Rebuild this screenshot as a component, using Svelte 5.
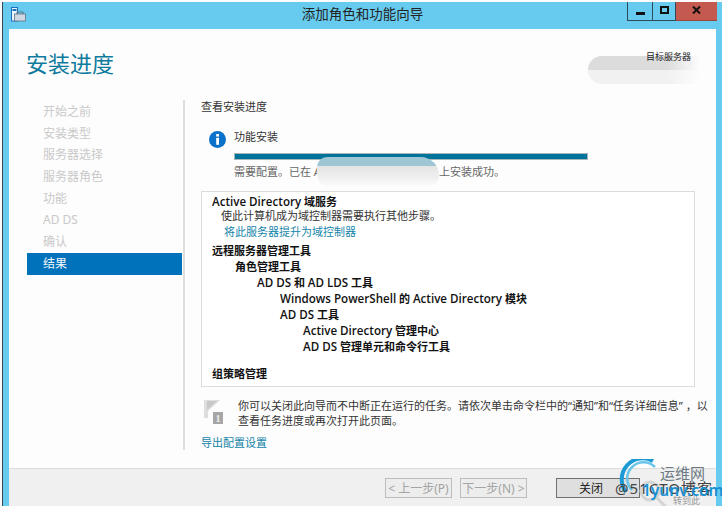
<script>
  const steps = ['开始之前','安装类型','服务器选择','服务器角色','功能','AD DS','确认'];
</script>

<div class="screen">
<div class="window">
  <header class="titlebar">
    <svg class="appicon" width="15" height="15" viewBox="0 0 15 15">
      <rect x="0.5" y="0.5" width="6" height="13.5" fill="#eaf6fd" stroke="#1f6fc0"/>
      <rect x="1.5" y="2" width="4" height="2" fill="#1f6fc0"/>
      <rect x="3.5" y="7" width="11" height="7" fill="#cfd8e0" stroke="#5e7388" stroke-width="0.8"/>
      <path d="M6 7V5h6v2" fill="none" stroke="#5e7388"/>
    </svg>
    <div class="wintitle">添加角色和功能向导</div>
    <div class="winbtns">
      <div class="wb min"><span></span></div>
      <div class="wb max"><span></span></div>
      <div class="wb close">
        <svg width="9" height="8" viewBox="0 0 9 8"><path d="M1 0.5l7 7M8 0.5l-7 7" stroke="#111" stroke-width="2"/></svg>
      </div>
    </div>
  </header>

  <div class="client">
    <div class="head">
      <h1>安装进度</h1>
      <div class="blob b1"></div>
      <div class="target">目标服务器</div>
    </div>
    <div class="body">
      <nav class="side">
        {#each steps as s}
          <div class="step">{s}</div>
        {/each}
        <div class="step current">结果</div>
      </nav>
      <main class="content">
        <div class="subhead">查看安装进度</div>
        <div class="status">
          <svg class="info" width="17" height="17" viewBox="0 0 17 17">
            <circle cx="8.5" cy="8.5" r="8.5" fill="#0a72c8"/>
            <rect x="7.2" y="3" width="2.8" height="2.6" fill="#fff"/>
            <rect x="7.2" y="6.8" width="2.8" height="7" fill="#fff"/>
          </svg>
          <div class="statusbody">
            <div class="statustitle">功能安装</div>
            <div class="bar"></div>
            <div class="statusmsg"><span class="msg1">需要配置。已在 A</span><span class="msg2">上安装成功。</span></div>
            <div class="blob b2"></div>
          </div>
        </div>
        <section class="results">
          <div class="r b l0 first"><span class="lat">Active Directory</span> 域服务</div>
          <div class="r l0b">使此计算机成为域控制器需要执行其他步骤。</div>
          <div class="r link l0c">将此服务器提升为域控制器</div>
          <div class="r b l0 gap">远程服务器管理工具</div>
          <div class="r b l1">角色管理工具</div>
          <div class="r b l2"><span class="lat">AD DS</span> 和 <span class="lat">AD LDS</span> 工具</div>
          <div class="r b l3"><span class="lat">Windows PowerShell</span> 的 <span class="lat">Active Directory</span> 模块</div>
          <div class="r b l3"><span class="lat">AD DS</span> 工具</div>
          <div class="r b l4"><span class="lat">Active Directory</span> 管理中心</div>
          <div class="r b l4"><span class="lat">AD DS</span> 管理单元和命令行工具</div>
          <div class="r b l0 gap2">组策略管理</div>
        </section>
        <div class="note">
          <svg class="flag" width="19" height="24" viewBox="0 0 19 24">
            <path d="M0 0h16l-12 11v7H0z" fill="#dedede"/>
            <path d="M3 1h10L3 10z" fill="#c8c8c8"/>
            <rect x="9" y="12" width="10" height="12" fill="#a6a6a6"/>
            <text x="14" y="22" text-anchor="middle" font-size="10" font-weight="700" fill="#eee" font-family="Liberation Serif, serif">1</text>
          </svg>
          <p>你可以关闭此向导而不中断正在运行的任务。请依次单击命令栏中的“通知”和“任务详细信息” ，以<br>查看任务进度或再次打开此页面。</p>
        </div>
        <div class="link export">导出配置设置</div>
      </main>
    </div>
    <footer class="foot">
      <button disabled>&lt; 上一步(P)</button>
      <button disabled>下一步(N) &gt;</button>
      <button class="closebtn">关闭</button>
    </footer>
  </div>

  <div class="wm">
    <svg class="wmlogo" width="60" height="50" viewBox="0 0 60 50">
      <circle cx="33" cy="32" r="9" fill="none" stroke="#d4d4d4" stroke-width="3"/>
      <path d="M40 39l9 9" stroke="#d4d4d4" stroke-width="3"/>
      <path d="M36 2A21 21 0 0 0 9 33" fill="none" stroke="#1c9ad6" stroke-width="4"/>
      <path d="M38 8A16 16 0 0 0 15 31" fill="none" stroke="#6cc6ea" stroke-width="2.5"/>
    </svg>
    <span class="wmcn">运维网</span>
    <span class="wmgrey">@51CTO博客</span>
    <span class="wmen">1yunv.com</span>
    <span class="wmsub">转到此</span>
  </div>
</div>
</div>

<style>
  :global(body) { margin: 0; background: #fff; }
  .screen { width: 722px; height: 506px; box-sizing: border-box; padding: 2px 0 0 2px; background: #fbfbfb; overflow: hidden; }
  .window {
    position: relative;
    height: 504px; box-sizing: border-box;
    background: #66cbee;
    border-left: 1px solid #3c4650;
    display: flex; flex-direction: column;
    overflow: hidden;
    font-family: "Noto Sans", "Noto Sans CJK SC", sans-serif;
    color: #1e1e1e;
  }
  .titlebar { height: 27px; flex: none; position: relative; display: flex; justify-content: center; align-items: center; }
  .appicon { position: absolute; left: 8px; top: 5px; }
  .wintitle { font-size: 13.5px; line-height: 20px; margin-top: -3px; color: #222; }
  .winbtns { position: absolute; top: 0; right: 5px; display: flex; height: 19px; }
  .wb { box-sizing: border-box; display: flex; align-items: center; justify-content: center; border-bottom: 1px solid #2f4a5a; }
  .min { width: 26px; border-left: 1px solid #2f4a5a; border-right: 1px solid #2f4a5a; }
  .min span { display: block; width: 9px; height: 3px; background: #111; margin-top: 4px; }
  .max { width: 23px; border-right: 1px solid #2f4a5a; }
  .max span { display: block; width: 9px; height: 8px; border: 2px solid #111; box-sizing: border-box; margin-top: -3px; }
  .close { width: 41px; background: #c4594f; border-bottom-color: #9b443c; }
  .close svg { margin-top: -3px; }

  .client {
    flex: 1; position: relative;
    margin: 0 6px 0 6px;
    background: #fdfdfd;
    display: flex; flex-direction: column; min-height: 0;
  }
  .head { height: 71px; flex: none; position: relative; }
  h1 { margin: 0; padding: 19px 0 0 17px; font-size: 22px; line-height: 30px; font-weight: 400; color: #0e7a9e; }
  .target { position: absolute; right: 25px; top: 21px; font-size: 9px; line-height: 13px; color: #222; }

  .body { flex: 1; display: flex; min-height: 0; }
  .side { width: 155px; margin-left: 18px; flex: none; padding-top: 1px; }
  .step { height: 21.7px; line-height: 21px; padding-left: 16px; font-size: 12px; color: #c9c9c9; }
  .step.current { background: #0072bc; color: #f4f8fb; }
  .content {
    flex: 1; margin-left: 1px; padding: 0 21px 0 16px;
    border-left: 2px solid #dedede;
    margin-bottom: 18px;
    min-width: 0;
  }
  .subhead { font-size: 11px; line-height: 14px; color: #333; }
  .status { display: flex; margin-top: 16px; margin-left: 8px; height: 49px; }
  .info { flex: none; margin-right: 8px; margin-top: 1px; }
  .statusbody { flex: 1; position: relative; }
  .statustitle { font-size: 11px; line-height: 14px; color: #333; }
  .bar { width: 352px; height: 5px; background: #00739a; border: 1px solid #a9b4b8; margin-top: 9px; }
  .statusmsg { margin-top: 5px; font-size: 11px; line-height: 14px; color: #666; position: relative; }
  .msg2 { position: absolute; left: 205px; top: 0; }

  .results {
    margin-top: 12px; height: 196px; box-sizing: border-box;
    border: 1px solid #dcdcdc; background: #fff; padding: 2px 0 0 10px;
  }
  .r { font-family: "Open Sans", "Noto Sans CJK SC", sans-serif; font-size: 11px; line-height: 16px; white-space: nowrap; color: #222; }
  .b { font-weight: 600; color: #111; }
  .lat { font-size: 11.6px; }
  .l0b { padding-left: 9px; line-height: 12px; color: #333; }
  .l0c { padding-left: 12px; margin-top: 2px; color: #1484a8; }
  .gap { margin-top: 3px; }
  .l1 { padding-left: 23px; }
  .l2 { padding-left: 45px; }
  .l3 { padding-left: 68px; }
  .l4 { padding-left: 91px; }
  .gap2 { margin-top: 11px; }
  .link { color: #1484a8; }

  .note { display: flex; margin-top: 11px; margin-left: 3px; }
  .flag { flex: none; margin: 2px 15px 0 0; }
  .note p { margin: 0; white-space: nowrap; font-size: 11px; line-height: 15px; color: #333; }
  .export { font-size: 11px; line-height: 14px; margin-top: 8px; }

  .foot {
    height: 38px; flex: none; box-sizing: border-box;
    border-top: 1px solid #dddddd; background: #f0f0f0;
    display: flex; align-items: flex-start; padding: 9px 0 0 376px; gap: 8px;
  }
  button {
    font: inherit; font-size: 12px; height: 20px; padding: 0; width: 67px; box-sizing: border-box;
    border: 1px solid #bdbdbd; background: #ededed; color: #a4a4a4; white-space: nowrap;
  }
  .closebtn { margin-left: 21px; width: 84px; border-color: #707070; background: #dfdfdf; color: #222; text-align: left; padding-left: 22px; }

  .blob { position: absolute; }
  .b1 {
    left: 579px; top: 27px; width: 112px; height: 28px; border-radius: 14px 0 0 14px;
    background: linear-gradient(90deg, transparent 70%, #fdfdfd), linear-gradient(#dcdcdc 0 50%, #f1f1f1 50%);
  }
  .b2 {
    left: 83px; top: 27px; width: 122px; height: 30px; border-radius: 12px 22px 14px 16px;
    background: linear-gradient(#9fc6d4 0 30%, #e4e4e4 30%, #f0f0f0 70%, #fcfcfc);
  }

  .wm { position: absolute; inset: 0; pointer-events: none; }
  .wmlogo { position: absolute; left: 614px; top: 457px; }
  .wmcn { position: absolute; left: 657px; top: 461px; font-size: 15px; line-height: 20px; color: #6d7a84; }
  .wmgrey { position: absolute; left: 612px; top: 477px; font-size: 15px; line-height: 18px; color: #444; letter-spacing: 1px; }
  .wmen { position: absolute; left: 639px; top: 478px; font-size: 15.5px; line-height: 20px; color: #1690d4; font-weight: 600; }
  .wmsub { position: absolute; left: 670px; top: 494px; font-size: 9px; line-height: 10px; color: #999; }
</style>
